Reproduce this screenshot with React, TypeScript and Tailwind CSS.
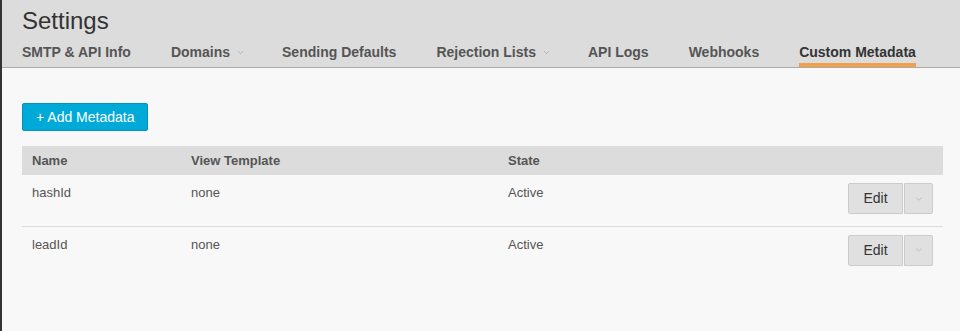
import { ChevronDown } from "lucide-react"

const tabs = [
  { label: "SMTP & API Info" },
  { label: "Domains", menu: true },
  { label: "Sending Defaults" },
  { label: "Rejection Lists", menu: true },
  { label: "API Logs" },
  { label: "Webhooks" },
  { label: "Custom Metadata", active: true },
]

const rows = [
  { name: "hashId", template: "none", state: "Active" },
  { name: "leadId", template: "none", state: "Active" },
]

export default function App() {
  return (
    <div className="min-h-[331px] border-l-2 border-[#333] bg-[#f8f8f8] font-['Liberation_Sans',Arial,sans-serif] text-[#555]">
      <div className="border-b border-[#aaa] bg-[#dcdcdc] px-5">
        <h1 className="pt-[6px] text-[24px] leading-[30px] text-[#333]">Settings</h1>
        <nav className="mt-[8px] flex gap-[40px]">
          {tabs.map((t) => (
            <div
              key={t.label}
              className={`flex items-center gap-[6px] border-b-4 pb-[3px] text-[14px] font-bold leading-[16px] ${
                t.active ? "border-[#f0a14c] text-[#333]" : "border-transparent"
              }`}
            >
              {t.label}
              {t.menu && <ChevronDown className="-mr-[3px] h-[9px] w-[9px] text-[#999]" strokeWidth={1.5} />}
            </div>
          ))}
        </nav>
      </div>

      <div className="px-5 pt-[35px]">
        <button className="h-[28px] rounded-[2px] border border-[#0094bf] bg-[#00aad8] px-[13px] text-[14px] leading-[16px] text-white">
          + Add Metadata
        </button>

        <table className="mt-[15px] w-[921px] border-collapse text-left text-[13px]">
          <thead>
            <tr className="h-[29px] bg-[#dcdcdc]">
              <th className="w-[169px] pl-[10px] font-bold">Name</th>
              <th className="w-[317px] font-bold">View Template</th>
              <th className="font-bold">State</th>
              <th></th>
            </tr>
          </thead>
          <tbody>
            {rows.map((r, i) => (
              <tr key={r.name} className={i === 0 ? "border-b border-[#ddd]" : ""}>
                <td className="h-[51px] pl-[10px] pt-[8px] align-top">{r.name}</td>
                <td className="pt-[8px] align-top">{r.template}</td>
                <td className="pt-[8px] align-top">{r.state}</td>
                <td className="pr-[10px] pt-[8px] align-top">
                  <div className="flex justify-end">
                    <div className="flex h-[31px] w-[55px] items-center justify-center rounded-l-[2px] border border-[#ccc] bg-[#e0e0e0] text-[14px] text-[#333]">
                      Edit
                    </div>
                    <div className="ml-px flex h-[31px] w-[29px] items-center justify-center rounded-r-[2px] border border-[#ccc] bg-[#e0e0e0]">
                      <ChevronDown className="h-[10px] w-[10px] text-[#aaa]" strokeWidth={1.5} />
                    </div>
                  </div>
                </td>
              </tr>
            ))}
          </tbody>
        </table>
      </div>
    </div>
  )
}
